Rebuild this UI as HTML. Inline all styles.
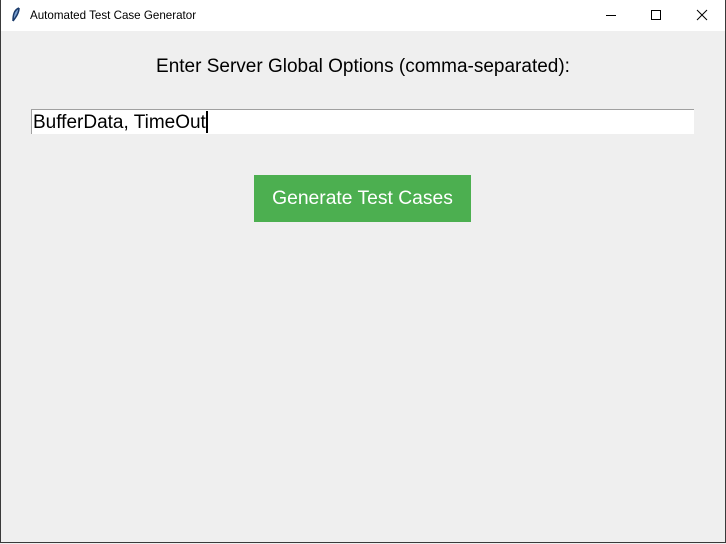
<!DOCTYPE html>
<html><head><style>
body{margin:0;width:726px;height:544px;overflow:hidden;background:#efefef;font-family:"Liberation Sans",sans-serif;position:relative}
.frame{position:absolute;left:0;top:0;width:724px;height:542px;border:1px solid #3a3a3a;border-top:none}
.title{position:absolute;left:0;top:0;width:726px;height:31px;background:#fff}
.title span{position:absolute;left:30px;top:9px;font-size:11.6px;color:#000}
.lbl{position:absolute;left:0;width:726px;top:56px;text-align:center;font-size:19px;color:#000}
.entry{position:absolute;left:31px;top:109px;width:663px;height:25px;background:#fff;border-top:1px solid #a0a0a0;border-left:1px solid #a0a0a0;box-sizing:border-box}
.txt{position:absolute;left:1px;top:1px;font-size:19px;color:#000;white-space:nowrap}
.caret{display:inline-block;width:2px;height:22px;background:#000;vertical-align:-5px}
.btn{position:absolute;left:254px;top:175px;width:217px;height:47px;background:#4caf50;color:#fff;font-size:19.3px;text-align:center;line-height:48px}
</style></head><body>
<div class="title">
<svg style="position:absolute;left:11px;top:7px" width="10" height="16" viewBox="0 0 10 16"><path d="M8 1 C3 3 2 8 2 14 M8 1 C8 6 5 10 2 14" stroke="#1a3a6a" stroke-width="1.5" fill="#7aa0d0"/></svg>
<span>Automated Test Case Generator</span>
<svg style="position:absolute;left:600px;top:0" width="126" height="31"><path d="M6 15.5H16" stroke="#000"/><rect x="51.5" y="10.5" width="9" height="9" fill="none" stroke="#000"/><path d="M97 10L107 20M107 10L97 20" stroke="#000"/></svg>
</div>
<div class="frame"></div>
<div class="lbl">Enter Server Global Options (comma-separated):</div>
<div class="entry"><div class="txt">BufferData, TimeOut<span class="caret"></span></div></div>
<div class="btn">Generate Test Cases</div>
</body></html>
